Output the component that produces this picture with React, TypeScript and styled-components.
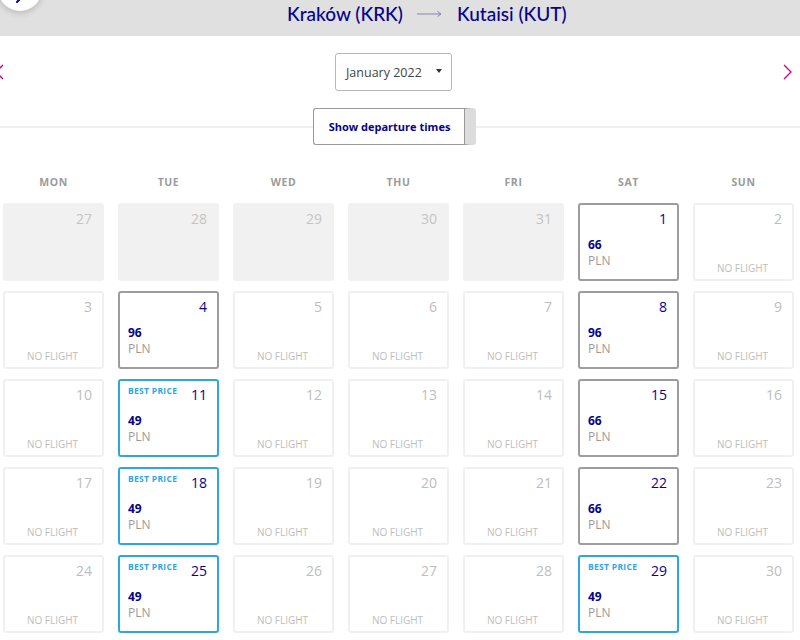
import React from "react";
import styled, { createGlobalStyle } from "styled-components";

const GlobalStyle = createGlobalStyle`
  html, body { margin: 0; padding: 0; background: #fff; overflow: hidden; }
  body { font-family: "Open Sans", "Liberation Sans", sans-serif; }
  * { box-sizing: border-box; }
`;

const NAVY = "#06038d";
const SKY = "#2ea6e4";
const PINK = "#c6007e";

const Page = styled.div`
  position: relative;
  width: 800px;
  height: 640px;
  overflow: hidden;
`;

const Header = styled.header`
  height: 36px;
  background: #e0e0e0;
  display: flex;
  align-items: center;
  justify-content: flex-start;
  padding-left: 287px;
  gap: 14px;
`;

const City = styled.span`
  font-family: "Lato", "Open Sans", sans-serif;
  font-size: 19px;
  font-weight: 500;
  color: ${NAVY};
  line-height: 1;
  margin-top: -10px;
`;

const RouteArrow = styled.svg`
  width: 26px;
  height: 8px;
  margin-top: -8px;
`;

const BackBubble = styled.div`
  position: absolute;
  left: -2px;
  top: -33px;
  width: 44px;
  height: 44px;
  border-radius: 50%;
  background: #fff;
  box-shadow: 0 2px 6px rgba(0, 0, 0, 0.18);
  display: flex;
  align-items: flex-end;
  justify-content: center;
  padding-bottom: 8px;
`;

const NavRow = styled.div`
  margin-top: 17px;
  width: 792px;
  height: 38px;
  display: flex;
  align-items: center;
  justify-content: space-between;
`;

const Chevron = styled.svg`
  width: 9px;
  height: 16px;
`;

const Select = styled.div`
  width: 117px;
  height: 38px;
  border: 1px solid #b8b8b8;
  border-radius: 3px;
  display: flex;
  align-items: center;
  justify-content: space-between;
  padding: 0 9px 0 10px;
  font-size: 12.5px;
  color: #444;
`;

const Caret = styled.span`
  width: 0;
  height: 0;
  border-left: 3px solid transparent;
  border-right: 3px solid transparent;
  border-top: 4px solid #333;
  margin-top: -2px;
`;

const ToolRow = styled.div`
  margin-top: 17px;
  display: grid;
  grid-template-columns: 313px 163px 1fr;
  align-items: center;
`;

const Rule = styled.div`
  height: 2px;
  background: #f0f0f0;
`;

const TimesButton = styled.button`
  width: 163px;
  height: 37px;
  background: #fff;
  border: 1px solid #999;
  border-right: 11px solid #dcdcdc;
  border-radius: 3px;
  box-shadow: inset -1px 0 0 #999;
  font-family: "Open Sans", sans-serif;
  font-size: 11px;
  font-weight: 700;
  color: ${NAVY};
  padding: 0;
  cursor: pointer;
`;

const Grid = styled.div<{ $top: number }>`
  display: grid;
  grid-template-columns: repeat(7, 101px);
  column-gap: 14px;
  row-gap: 10px;
  padding-left: 3px;
  margin-top: ${(p) => p.$top}px;
`;

const WeekDay = styled.div`
  text-align: center;
  font-size: 10.5px;
  font-weight: 700;
  letter-spacing: 0.6px;
  color: #9b9b9b;
  line-height: 16px;
`;

type Kind = "past" | "none" | "flight" | "best";

const Cell = styled.div<{ $kind: Kind }>`
  height: 78px;
  border-radius: 3px;
  display: flex;
  flex-direction: column;
  padding: 5px 10px 0 8px;
  background: ${(p) => (p.$kind === "past" ? "#f1f1f1" : "#fff")};
  border: 2px solid
    ${(p) =>
      p.$kind === "past"
        ? "#f1f1f1"
        : p.$kind === "none"
        ? "#f0f0f0"
        : p.$kind === "best"
        ? SKY
        : "#9d9d9d"};
`;

const TopRow = styled.div`
  display: flex;
  justify-content: space-between;
  align-items: flex-start;
  height: 18px;
`;

const Badge = styled.span`
  font-size: 8.5px;
  font-weight: 700;
  letter-spacing: 0.3px;
  color: ${SKY};
  line-height: 10px;
`;

const DayNum = styled.span<{ $active: boolean; $past: boolean }>`
  margin-left: auto;
  font-size: 14px;
  line-height: 18px;
  color: ${(p) => (p.$active ? NAVY : p.$past ? "#c4c4c4" : "#bdbdbd")};
`;

const Price = styled.div`
  margin-top: 9px;
  font-size: 12px;
  font-weight: 700;
  color: ${NAVY};
  line-height: 16px;
`;

const Currency = styled.div`
  font-size: 12px;
  color: #9a9a9a;
  line-height: 16px;
`;

const NoFlight = styled.div`
  margin-top: auto;
  margin-bottom: 5px;
  text-align: center;
  font-size: 10px;
  color: #bdbdbd;
  line-height: 12px;
`;

type Day = { d: number; kind: Kind; price?: number };

const weekdays = ["MON", "TUE", "WED", "THU", "FRI", "SAT", "SUN"];

const flights: Record<number, { price: number; best?: boolean }> = {
  1: { price: 66 },
  4: { price: 96 },
  8: { price: 96 },
  11: { price: 49, best: true },
  15: { price: 66 },
  18: { price: 49, best: true },
  22: { price: 66 },
  25: { price: 49, best: true },
  29: { price: 49, best: true },
};

const days: Day[] = [
  ...[27, 28, 29, 30, 31].map((d) => ({ d, kind: "past" as Kind })),
  ...Array.from({ length: 30 }, (_, i) => {
    const d = i + 1;
    const f = flights[d];
    if (!f) return { d, kind: "none" as Kind };
    return { d, kind: (f.best ? "best" : "flight") as Kind, price: f.price };
  }),
];

export default function App() {
  return (
    <Page>
      <GlobalStyle />
      <Header>
        <City>Kraków (KRK)</City>
        <RouteArrow viewBox="0 0 26 8">
          <path d="M0 4 H24 M20.5 1.5 L24 4 L20.5 6.5" stroke="#8585b8" strokeWidth="1" fill="none" />
        </RouteArrow>
        <City>Kutaisi (KUT)</City>
      </Header>
      <BackBubble>
        <svg width="8" height="6" viewBox="0 0 8 6">
          <path d="M1 5 L5 1" stroke={NAVY} strokeWidth="2" fill="none" strokeLinecap="round" />
        </svg>
      </BackBubble>
      <NavRow>
        <Chevron viewBox="0 0 9 16" style={{ marginLeft: -5 }}>
          <path d="M8 1 L1 8 L8 15" stroke={PINK} strokeWidth="1.3" fill="none" />
        </Chevron>
        <Select>
          <span>January 2022</span>
          <Caret />
        </Select>
        <Chevron viewBox="0 0 9 16">
          <path d="M1 1 L8 8 L1 15" stroke={PINK} strokeWidth="1.3" fill="none" />
        </Chevron>
      </NavRow>
      <ToolRow>
        <Rule />
        <TimesButton>Show departure times</TimesButton>
        <Rule />
      </ToolRow>
      <Grid $top={29}>
        {weekdays.map((w) => (
          <WeekDay key={w}>{w}</WeekDay>
        ))}
      </Grid>
      <Grid $top={13}>
        {days.map((day, i) => {
          const active = day.kind === "flight" || day.kind === "best";
          return (
            <Cell key={i} $kind={day.kind}>
              <TopRow>
                {day.kind === "best" && <Badge>BEST PRICE</Badge>}
                <DayNum $active={active} $past={day.kind === "past"}>
                  {day.d}
                </DayNum>
              </TopRow>
              {active && (
                <>
                  <Price>{day.price}</Price>
                  <Currency>PLN</Currency>
                </>
              )}
              {day.kind === "none" && <NoFlight>NO FLIGHT</NoFlight>}
            </Cell>
          );
        })}
      </Grid>
    </Page>
  );
}
